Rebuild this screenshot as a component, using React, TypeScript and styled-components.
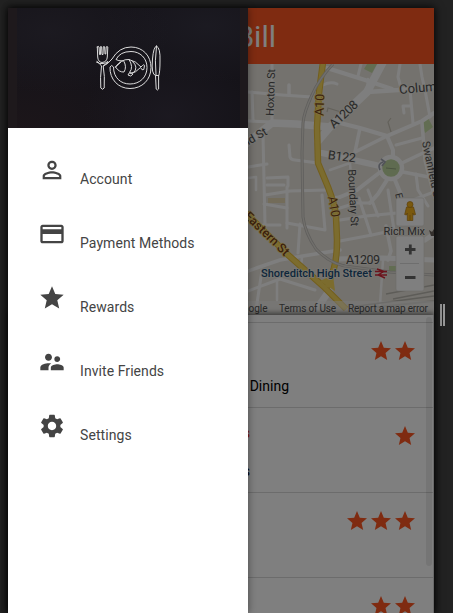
import React from 'react';
import styled, { createGlobalStyle } from 'styled-components';
import {
  MdPersonOutline,
  MdPayment,
  MdStar,
  MdSupervisorAccount,
  MdSettings,
} from 'react-icons/md';

const GlobalStyle = createGlobalStyle`
  *, *::before, *::after { box-sizing: border-box; }
  html, body { margin: 0; height: 100%; overflow: hidden; background: #222; }
  body { font-family: Roboto, "Liberation Sans", sans-serif; font-size: 14px; }
`;

const Page = styled.div`
  display: grid;
  grid-template-columns: 426px 11px;
  height: 613px;
  padding: 8px 8px 0;
  overflow: hidden;
  background: #222;
`;

const Screen = styled.main`
  position: relative;
  display: flex;
  flex-direction: column;
  height: 605px;
  background: #fff;
  box-shadow: 0 0 8px 1px rgba(0, 0, 0, 0.85);
`;

const AppBar = styled.header`
  display: flex;
  align-items: center;
  justify-content: flex-end;
  flex: 0 0 56px;
  padding-right: 158px;
  background: #ff5722;
  color: #fff;
  font-size: 30px;
  white-space: nowrap;
`;

const MapArea = styled.section`
  display: flex;
  justify-content: flex-end;
  flex: 0 0 251px;
  background: #e9e5dc;

  svg { display: block; }
`;

const PlaceList = styled.section`
  flex: 1;
  min-height: 0;
  padding-top: 7px;
  border-right: 1px solid #d5d5d5;
  overflow: hidden;
  box-shadow: 0 -2px 5px rgba(0, 0, 0, 0.5);
`;

const PlaceRow = styled.article`
  display: grid;
  grid-template-columns: 242px 1fr;
  height: 85px;
  border-top: 1px solid #d8d8d8;
  padding: 16px 16px 0 0;
`;

const PlaceText = styled.div`
  display: flex;
  flex-direction: column;
  gap: 25px;
  align-items: flex-end;
  line-height: 16px;
  padding-top: 5px;
`;

const PlaceName = styled.span`
  height: 9px;
  line-height: 9px;
  color: #ff3d1c;
  font-weight: 500;
`;

const PlaceKind = styled.span<{ $shift?: number }>`
  color: #000;
  margin-right: ${(p) => -(p.$shift ?? 0)}px;
`;

const Stars = styled.div`
  display: flex;
  justify-content: flex-end;
  height: 24px;
  color: #ff5722;
`;

const ScrollThumb = styled.div`
  position: absolute;
  right: 2px;
  top: 309px;
  width: 6px;
  height: 249px;
  border-radius: 3px;
  background: rgba(0, 0, 0, 0.08);
`;

const Scrim = styled.div`
  position: absolute;
  inset: 0;
  background: rgba(0, 0, 0, 0.5);
`;

const Drawer = styled.aside`
  position: absolute;
  inset: 0 auto 0 0;
  width: 240px;
  background: #fff;
  box-shadow: 1px 0 7px rgba(0, 0, 0, 0.35);
`;

const Banner = styled.div`
  display: flex;
  justify-content: center;
  height: 120px;
  padding: 0 8px 0 9px;
  background: #1e191c;
`;

const Slate = styled.div`
  display: flex;
  justify-content: center;
  flex: 1;
  padding: 33px 2px 0 0;
  background:
    radial-gradient(ellipse at 15% 20%, rgba(32, 30, 37, 0.6), transparent 45%),
    radial-gradient(ellipse at 85% 15%, rgba(30, 29, 37, 0.7), transparent 40%),
    radial-gradient(ellipse at 68% 90%, rgba(30, 27, 35, 0.7), transparent 40%),
    radial-gradient(ellipse at 0% 100%, rgba(31, 23, 26, 0.7), transparent 45%),
    #151319;
`;

const Menu = styled.nav`
  display: flex;
  flex-direction: column;
  padding-top: 16px;
`;

const MenuItem = styled.a`
  display: grid;
  grid-template-columns: 28px 1fr;
  column-gap: 14px;
  height: 64px;
  padding: 12px 0 0 30px;
  color: #444;
`;

const MenuLabel = styled.span`
  padding-top: 15px;
  line-height: 16px;
  letter-spacing: 0.07px;
`;

const Gutter = styled.div`
  display: flex;
  justify-content: flex-end;
  padding-top: 296px;
`;

const Handle = styled.div`
  width: 5px;
  height: 22px;
  border: solid #999;
  border-width: 0 2px;
`;

const items = [
  { label: 'Account', Icon: MdPersonOutline },
  { label: 'Payment Methods', Icon: MdPayment },
  { label: 'Rewards', Icon: MdStar },
  { label: 'Invite Friends', Icon: MdSupervisorAccount },
  { label: 'Settings', Icon: MdSettings },
];

const places = [
  { name: '', kind: 'Casual Dining', stars: 2, shift: 39 },
  { name: 'Burgers', kind: 'Burgers', stars: 1, shift: 0 },
  { name: '', kind: '', stars: 3, shift: 0 },
  { name: '', kind: '', stars: 2, shift: 0 },
];

/* Minor streets: [path, stroke width] */
const streets: [string, number][] = [
  ['M248 92L282 95L312 97', 3],
  ['M272 64V123', 3],
  ['M289 85V95', 3.5],
  ['M252 92L253 121', 3],
  ['M248 121L272 122', 3],
  ['M263 135L265 225', 3],
  ['M248 167L267 164', 3],
  ['M289 145L290 157Q291 160 295 160L318 163', 3],
  ['M267 178L288 177V186', 3],
  ['M267 185L284 185', 3],
  ['M248 178L256 177V190', 2.5],
  ['M323 85Q331 81 337 84', 3],
  ['M327 68L365 80L392 89', 4],
  ['M361 64L358 76', 3],
  ['M367 92L398 90L434 86', 4.5],
  ['M368 79L367 92', 2.5],
  ['M340 123L360 128L387 136L422 121L434 113', 4],
  ['M387 136L393 150V160', 4],
  ['M360 128L355 152L387 136', 3.5],
  ['M402 163L423 153L434 148', 3.5],
  ['M403 172L434 178', 3.5],
  ['M396 145L422 138', 3],
  ['M422 123L425 160L434 195', 3.5],
  ['M410 90L413 123', 3],
  ['M420 64L422 77L425 90L430 117', 3],
  ['M400 64L398 77L401 88', 3],
  ['M404 113L403 106L410 106', 3],
  ['M387 180L378 194L370 203', 4],
  ['M395 180L402 197', 4],
  ['M379 173L357 190L340 197', 4],
  ['M416 174L418 190L428 206', 3],
  ['M330 170L350 163L352 190', 2.5],
  ['M265 195L290 191L326 190', 3],
  ['M287 187V228', 3],
  ['M264 204L287 208', 3],
  ['M287 223L325 230L322 195', 3],
  ['M300 224L298 253', 3],
  ['M263 225H280', 3],
  ['M248 271L280 260L303 256L340 250', 3.5],
  ['M262 270L256 310', 3],
  ['M248 291L280 279L315 290', 3],
  ['M277 280V300', 2.5],
  ['M302 257L300 277', 2.5],
  ['M340 220L366 216L397 213', 3],
  ['M340 241L372 235L395 230', 3],
  ['M359 198L371 235', 3],
  ['M368 190L378 216', 3],
  ['M388 190L394 230', 3],
  ['M340 208L356 203L370 203', 3],
  ['M383 260L380 305', 2.5],
  ['M400 205L434 192', 3],
  ['M386 226L391 251L388 260', 3.5],
  ['M425 240L434 234', 5],
  ['M339 197L331 198', 3],
];

const railPath =
  'M333 64Q319 79 312 95Q304 112 303 123L302 153L303 217Q305 233 316 249Q332 266 352 267L390 272L434 275';

const StreetMap = () => (
  <svg width="186" height="251" viewBox="248 64 186 251" fontFamily="Roboto, sans-serif">
    <rect x="248" y="64" width="186" height="251" fill="#e9e5dc" />
    <path d="M367 64H377L372 73L364 69ZM420 122L428 118L433 127L425 133ZM389 266H396V271H389Z" fill="#c5dba5" />
    <path d="M268 198H285V203H268Z" fill="#e6d8b4" />
    <g fill="none" stroke="#fdfdfd" strokeLinejoin="round" strokeLinecap="round">
      {streets.map(([d, w]) => (
        <path key={d} d={d} strokeWidth={w} />
      ))}
      <path d="M246 144L258 134L272 123L296 124L330 127" strokeWidth="7.5" />
      <path d="M318 141L330 127L367 92L383 62" strokeWidth="8" />
      <path d="M322 153L380 166" strokeWidth="6" />
      <path d="M337 259L382 258L434 260" strokeWidth="5" />
      <path d="M329 291L318 307" strokeWidth="7" />
    </g>
    <circle cx="391" cy="168" r="11" fill="#bfd6a0" stroke="#fdfdfd" strokeWidth="4.5" />
    <path d="M386 168L396 169" stroke="#94a680" />
    <path d="M380 170Q377 164 383 162M381 159L385 162L382 166" fill="none" stroke="#a3a6b3" strokeWidth="1.7" />
    <path d="M327 112L328 108L341 112M391 132L388 122L391 118" fill="none" stroke="#c7c2b6" strokeWidth="1.2" />
    <g fill="none" stroke="#bbb8b0">
      <path d="M386 294L434 285M393 299L434 291M350 307L434 296" strokeWidth="1.5" />
      <path d="M360 309L434 301" strokeWidth="2" stroke="#cfccc5" />
    </g>
    <g fill="none" strokeLinejoin="round">
      <path d="M246 213L287 254L323 286L346 309" stroke="#e6bd3c" strokeWidth="6.5" />
      <path d="M323 62L319 93L317 127L318 163L328 187Q335 205 336 217L337 240Q337 258 334 268L327 287" stroke="#e6bd3c" strokeWidth="6.5" />
      <path d="M246 213L287 254L323 286L346 309" stroke="#f8d95c" strokeWidth="4.5" />
      <path d="M323 62L319 93L317 127L318 163L328 187Q335 205 336 217L337 240Q337 258 334 268L327 287" stroke="#f8d95c" strokeWidth="4.5" />
      <path d="M320 281L333 275L335 291Z" fill="#f8d95c" />
      <path d={railPath} stroke="#c0bebb" strokeWidth="3" />
      <path d={railPath} stroke="#e2dfd7" strokeWidth="1.4" />
    </g>
    <g fill="#505050" stroke="#f1eee6" strokeWidth="1.600" paintOrder="stroke" strokeLinejoin="round">
      <text transform="translate(273.500 116) rotate(-88)" fontSize="11" textLength="47">Hoxton St</text>
      <text transform="translate(268 134) rotate(-30)" fontSize="11.5" textAnchor="end">Old St</text>
      <text transform="translate(334 129) rotate(-43)" fontSize="12.5" textLength="34">A1208</text>
      <text transform="translate(327.500 159) rotate(7)" fontSize="12.5" textLength="28">B122</text>
      <text transform="translate(399.500 94) rotate(-5)" fontSize="13">Columbia Rd</text>
      <text transform="translate(422 142) rotate(78)" fontSize="11">Swanfield St</text>
      <text transform="translate(348 169.500) rotate(87)" fontSize="11" textLength="57">Boundary St</text>
      <text transform="translate(346 263.500)" fontSize="12.5" textLength="34">A1209</text>
      <text transform="translate(395 194) rotate(75)" fontSize="10">E</text>
      <text transform="translate(383.500 234.500)" fontSize="11" textLength="41.500">Rich Mix</text>
    </g>
    <path d="M429 230L432 232L434 229V236H431Z" fill="#68605a" />
    <g fill="#7a4318" stroke="#f8df82" strokeWidth="1.5" paintOrder="stroke" strokeLinejoin="round">
      <text transform="translate(323.500 116) rotate(-88)" fontSize="12.500" textLength="22">A10</text>
      <text transform="translate(328 197) rotate(80)" fontSize="12.500" textLength="21">A10</text>
      <text transform="translate(243.500 217) rotate(44)" fontSize="12.500" fontWeight="500" textLength="57">Eastern St</text>
    </g>
    <text x="261" y="276.700" fontSize="11.200" fontWeight="500" textLength="111" fill="#1b4f78" stroke="#f1eee6" strokeWidth="1.600" paintOrder="stroke">
      Shoreditch High Street
    </text>
    <g fill="none" stroke="#d72638" strokeWidth="1.4">
      <path d="M375 271.500H387M375 275H387M377 269L384 271.500L378 275L385 278" />
    </g>
    <rect x="248" y="301" width="186" height="14" fill="#f5f5f5" opacity="0.5" />
    <g fill="#555" fontSize="10">
      <text x="267.500" y="312" textAnchor="end">Google</text>
      <text x="279" y="312" textLength="57">Terms of Use</text>
      <text x="348" y="312" textLength="80">Report a map error</text>
    </g>
    <g fill="#fff" stroke="#d9d6d0" strokeWidth="0.6">
      <rect x="396" y="198" width="28" height="28" rx="2" />
      <rect x="396" y="236" width="28" height="55" rx="2" />
    </g>
    <path d="M400 263.500H419" stroke="#dcdcdc" />
    <path d="M405 249.500H415.500M410.300 244.500V254.500M405 277.500H415.500" stroke="#666" strokeWidth="2.8" />
    <g fill="#f5b31d" stroke="#b77e14" strokeWidth="0.7">
      <path d="M406.500 207H413.500L415.500 214.500L413.500 215L412.800 213V220.500H407.300V213L406.500 215L404.700 214.500Z" />
      <circle cx="410" cy="204.500" r="3" />
      <path d="M410 215V220" />
    </g>
  </svg>
);

const PlateLogo = () => (
  <svg width="66" height="50" viewBox="95 41 66 50" fill="none" stroke="#dcdcdc" strokeWidth="1" strokeLinecap="round" strokeLinejoin="round">
    {/* fork */}
    <path d="M97.300 47L97.700 57Q98 62 102 62.500Q107 62 107.300 57L107.800 47Q107 45.500 106.200 47L105.800 54L105 54L104.600 47Q104 45.500 103.300 47L103 54.500L102 54.500L101.600 47Q101 45.500 100.300 47L100.500 54.500L99.500 54.500L99 47Q98.200 45.500 97.300 47Z" />
    <path d="M96.500 62Q99.500 62.500 101.500 66Q100 78 100.800 88Q102.500 90.500 104.200 88Q105 76 103.200 66L105.500 64Q108 64 108 61.500Q106 63 103 63.500Q99 64.500 97 61.500" />
    {/* plate */}
    <path d="M103.500 66Q108 64 112 59Q119 47 131 47C143 47 151 56 151 67.500C151 80 142 88.500 130 88.500C118 88.500 109.500 79 110 67Q111.500 64 113.500 67C113.500 78 121 84 130 84C140 84 147 77 147 67.500C147 58 140 51.500 131 51.500Q120 51.500 116 59.500Q118 61 123 61" />
    {/* fish */}
    <path d="M115.500 67Q121 59 129 59.500Q136 61 141 67Q144 63.500 144.500 65.500L143.800 69.500Q142 71 140.500 67.500Q136 73 130 73.500M115.500 67Q119 72.500 124 72Q127 67 124 61.500M129 59.500Q134 67 129.500 72.500L128 75Q131 77.500 133 74L130 72.500M132.500 61.500Q139 67 133.500 73M115.500 67L121 62" />
    {/* knife */}
    <path d="M155.500 75.500Q151 75 152.500 59Q153.500 47 156.500 46Q160.500 48 160 61Q160 72 158.800 75.500H155.500L156.200 89Q157.500 91 158.600 89V75.500M156.500 46Q154.500 61 156 75" />
  </svg>
);

export default function App() {
  return (
    <>
      <GlobalStyle />
      <Page>
        <Screen>
          <AppBar>Split Bill</AppBar>
          <MapArea>
            <StreetMap />
          </MapArea>
          <PlaceList>
            {places.map((p, i) => (
              <PlaceRow key={i}>
                <PlaceText>
                  <PlaceName>{p.name}</PlaceName>
                  <PlaceKind $shift={p.shift}>{p.kind}</PlaceKind>
                </PlaceText>
                <Stars>
                  {Array.from({ length: p.stars }, (_, n) => (
                    <MdStar key={n} size={24} />
                  ))}
                </Stars>
              </PlaceRow>
            ))}
          </PlaceList>
          <ScrollThumb />
          <Scrim />
          <Drawer>
            <Banner>
              <Slate>
                <PlateLogo />
              </Slate>
            </Banner>
            <Menu>
              {items.map(({ label, Icon }) => (
                <MenuItem key={label}>
                  <Icon size={28} />
                  <MenuLabel>{label}</MenuLabel>
                </MenuItem>
              ))}
            </Menu>
          </Drawer>
        </Screen>
        <Gutter>
          <Handle />
        </Gutter>
      </Page>
    </>
  );
}
